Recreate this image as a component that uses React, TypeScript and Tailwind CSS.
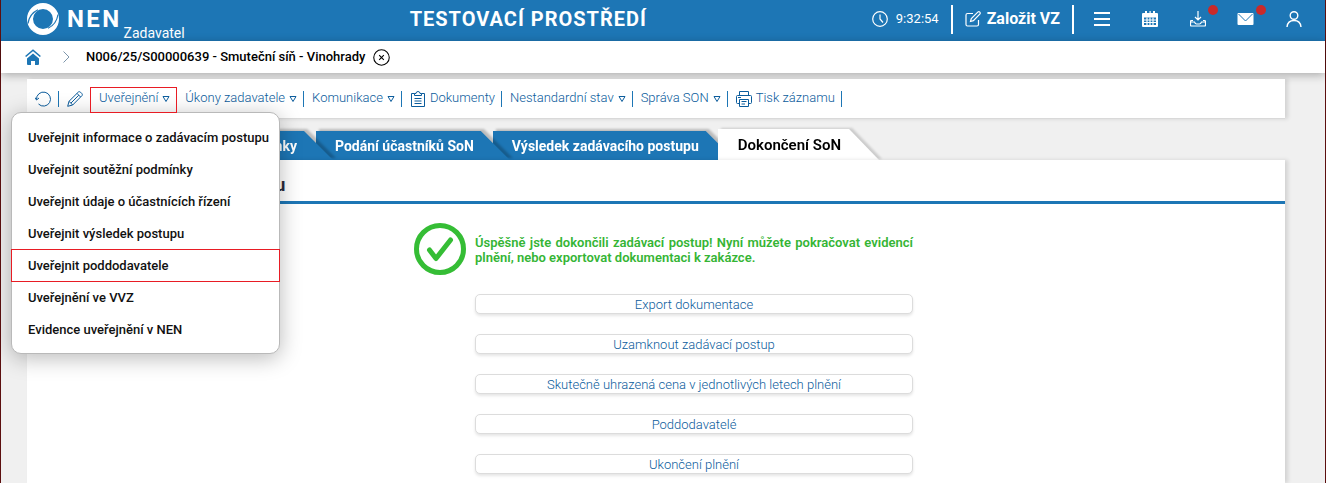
import type { ReactNode } from 'react'

const menuItems = [
  'Uveřejnit informace o zadávacím postupu',
  'Uveřejnit soutěžní podmínky',
  'Uveřejnit údaje o účastnících řízení',
  'Uveřejnit výsledek postupu',
  'Uveřejnit poddodavatele',
  'Uveřejnění ve VVZ',
  'Evidence uveřejnění v NEN',
]

const actions = [
  'Export dokumentace',
  'Uzamknout zadávací postup',
  'Skutečně uhrazená cena v jednotlivých letech plnění',
  'Poddodavatelé',
  'Ukončení plnění',
]

function Logo() {
  return (
    <svg viewBox="0 0 32 32" className="h-8 w-8" fill="none">
      <path
        fill="#fff"
        fillRule="evenodd"
        d="M16 0a16 16 0 1 1 0 32a16 16 0 0 1 0-32zM16 6a10 10 0 1 0 0 20a10 10 0 0 0 0-20z"
      />
      <path stroke="#1d76b5" strokeWidth="1.200" d="M1 20.500C2 14 5 9.500 11 6.800" />
      <path stroke="#1d76b5" strokeWidth="1.200" d="M31 11.500C30 18 27 22.500 21 25.200" />
    </svg>
  )
}

function Icon({ children, className = 'h-4 w-4' }: { children: ReactNode; className?: string }) {
  return (
    <svg viewBox="0 0 16 16" className={`shrink-0 ${className}`} fill="none" stroke="currentColor" strokeWidth="1.200">
      {children}
    </svg>
  )
}

function Triangle() {
  return (
    <svg viewBox="0 0 8 8" className="h-2 w-2 shrink-0" fill="none" stroke="currentColor">
      <path d="M1 1.500h6L4 6.500z" />
    </svg>
  )
}

function Divider() {
  return <span className="h-4 w-px shrink-0 bg-[#1d76b5]" />
}

function ToolItem({ label, icon, dropdown }: { label: string; icon?: ReactNode; dropdown?: boolean }) {
  return (
    <button className="flex items-center gap-1 whitespace-nowrap pl-2 pr-1.5">
      {icon}
      <span className="-mt-px">{label}</span>
      {dropdown && <Triangle />}
    </button>
  )
}

function HeaderButton({ label, badge, children }: { label: string; badge?: boolean; children: ReactNode }) {
  return (
    <button aria-label={label} className="relative flex h-9 w-12 items-center justify-center">
      {children}
      {badge && <span className="absolute right-1 top-1 h-[10px] w-[10px] rounded-full bg-[#c92a2a]" />}
    </button>
  )
}

function Header() {
  return (
    <header className="flex h-[41px] items-center justify-between bg-[#1d76b5] pb-[3px] pl-[26px] pr-[7px] text-white">
      <div className="flex items-center gap-2">
        <Logo />
        <div className="flex items-end gap-0.5">
          <span className="text-2xl leading-8 font-bold tracking-widest">NEN</span>
          <span className="-mb-2 text-sm leading-5">Zadavatel</span>
        </div>
      </div>
      <h1 className="text-xl leading-7 font-bold tracking-wider">TESTOVACÍ PROSTŘEDÍ</h1>
      <div className="flex items-center">
        <Icon>
          <circle cx="8" cy="8" r="7.300" />
          <path d="M8 3.500V8l3 3.500" />
        </Icon>
        <time className="ml-2 text-[13px]">9:32:54</time>
        <div className="ml-3 mr-1 flex h-[29px] items-center border-x-2 border-white pl-3">
          <button className="flex items-center gap-1.5 pr-3 text-base font-bold">
            <Icon>
              <path d="M8 2.500H2.500q-1.500 0-1.500 1.500v9.500q0 1.500 1.500 1.500H12q1.500 0 1.500-1.500V9" />
              <path d="M5.500 10.500l.8-3L13 .9q1-.6 1.800.2t.2 1.800L8.400 9.700z" />
            </Icon>
            Založit VZ
          </button>
        </div>
        <HeaderButton label="Menu">
          <Icon>
            <path strokeWidth="2" d="M0 2h16M0 8h16M0 14h16" />
          </Icon>
        </HeaderButton>
        <HeaderButton label="Kalendář">
          <Icon>
            <path fill="currentColor" stroke="none" fillRule="evenodd" d="M1 2h2V0h2v2h2.500V0h1.200v2H11V0h2v2h2q1 0 1 1v12q0 1-1 1H1q-1 0-1-1V3q0-1 1-1zM2 6.500v7.500h12V6.500z" />
            <path d="M2 9h12M2 11.500h12M5 6.500V14M8 6.500V14M11 6.500V14" />
          </Icon>
        </HeaderButton>
        <HeaderButton label="Stažené soubory" badge>
          <Icon>
            <path d="M8 0v8.500M5 6l3 3l3-3M3 9.500H1.500q-1 0-1 1V14q0 1 1 1h13q1 0 1-1v-3.500q0-1-1-1H13M.5 11h4q.8 2 2 2h3q1.200 0 2-2h4" />
          </Icon>
        </HeaderButton>
        <HeaderButton label="Zprávy" badge>
          <Icon className="h-4 w-[17px]">
            <rect x="0" y="2" width="16" height="12" rx="1" fill="currentColor" stroke="none" />
            <path stroke="#1d76b5" strokeWidth="1" d="M1 3l7 7l7-7" />
          </Icon>
        </HeaderButton>
        <HeaderButton label="Uživatel">
          <Icon>
            <circle cx="8" cy="4.500" r="3.800" strokeWidth="1.400" />
            <path strokeWidth="1.400" d="M1 16q.6-6.500 7-6.500t7 6.500" />
          </Icon>
        </HeaderButton>
      </div>
    </header>
  )
}

function Breadcrumb() {
  return (
    <nav className="flex h-8 items-center bg-white pl-6 text-[13px] font-medium text-black shadow-[0_2px_10px_rgba(0,0,0,0.3)]">
      <a href="#" aria-label="Domů" className="text-[#1d76b5]">
        <svg viewBox="0 0 16 16" className="h-4 w-4">
          <path fill="currentColor" d="M8 4.500l6 5V15q0 1-1 1h-3v-4H6v4H3q-1 0-1-1V9.500z" />
          <path fill="none" stroke="currentColor" strokeWidth="1.600" d="M.6 7.500L8 1.200l7.400 6.300" />
        </svg>
      </a>
      <svg viewBox="0 0 7 12" className="ml-[22px] h-3 w-[7px]" fill="none" stroke="#7d96ab">
        <path d="M.5.5L6 6L.5 11.500" />
      </svg>
      <span className="ml-4">N006/25/S00000639 - Smuteční síň - Vinohrady</span>
      <button aria-label="Zavřít" className="ml-2">
        <Icon className="h-[17px] w-[17px]">
          <circle cx="8" cy="8" r="7.300" strokeWidth="1" />
          <path strokeWidth="1" d="M5.800 5.800l4.400 4.400M10.200 5.800l-4.400 4.400" />
        </Icon>
      </button>
    </nav>
  )
}

function PublishMenu() {
  return (
    <ul className="absolute -left-4 top-[33px] z-20 w-[269px] rounded-[10px] border border-[#b9b9b9] bg-white py-2 text-[13px] font-medium whitespace-nowrap text-[#111] shadow-[0_4px_22px_rgba(0,0,0,0.28)]">
      {menuItems.map((item) => (
        <li key={item}>
          {item === 'Uveřejnit poddodavatele' ? (
            <button className="-mx-px -mb-px flex h-[33px] w-[269px] items-center border border-[#e81c24] px-4">{item}</button>
          ) : (
            <button className="flex h-8 w-full items-center px-4 pt-px">{item}</button>
          )}
        </li>
      ))}
    </ul>
  )
}

function Toolbar() {
  return (
    <div className="relative z-10 flex h-10 items-center border-b border-[#d9d9d9] bg-white text-[13px] font-light text-[#0b5c9c] shadow-[3px_0_4px_rgba(0,0,0,0.12)]">
      <button aria-label="Obnovit" className="pl-2 pr-[7px]">
        <Icon>
          <path strokeWidth="1" d="M1.500 8.500a7 7 0 1 1 2 4.500M0 6.500l1.500 2.500L4 7" />
        </Icon>
      </button>
      <Divider />
      <button aria-label="Upravit" className="pl-2">
        <Icon>
          <path strokeWidth="1" d="M.7 15.300l1.300-5L11.500.9q1-.6 2 .3l1.300 1.300q.9 1 .3 2L5.700 14zM2 10.300L5.700 14M10 2.400L13.600 6M4 12L11.800 4.200" />
        </Icon>
      </button>
      <div className="relative z-30 ml-[7px] mt-0.5 flex h-[26px] items-center border border-[#e81c24] pb-0.5">
        <ToolItem label="Uveřejnění" dropdown />
      </div>
      <ToolItem label="Úkony zadavatele" dropdown />
      <Divider />
      <ToolItem label="Komunikace" dropdown />
      <Divider />
      <ToolItem
        label="Dokumenty"
        icon={
          <Icon>
            <path strokeWidth="1" d="M4.500 2.500h-3v13h13v-13h-3M4.500 4.500v-2H6q0-2 2-2t2 2h1.500v2zM4.500 7.500h7M4.500 10h7M4.500 12.500h7" />
          </Icon>
        }
      />
      <Divider />
      <ToolItem label="Nestandardní stav" dropdown />
      <Divider />
      <ToolItem label="Správa SON" dropdown />
      <Divider />
      <ToolItem
        label="Tisk záznamu"
        icon={
          <Icon>
            <path strokeWidth="1" d="M3.500 4.500v-4h9v4M3.500 12.500h-2q-1 0-1-1v-6q0-1 1-1h13q1 0 1 1v6q0 1-1 1h-2M3.500 8.500h9v7h-9zM2 6.500h3M5.500 10.500h5M5.500 13h3.500" />
          </Icon>
        }
      />
      <Divider />
      <PublishMenu />
    </div>
  )
}

function Tab({ label, className = '' }: { label: string; className?: string }) {
  return (
    <div className={`-mr-[17px] flex drop-shadow-[3px_-2px_1px_rgba(0,0,0,0.22)] ${className}`}>
      <button className="h-[29px] w-full bg-[#1d76b5] pl-[19px] pr-9 text-right whitespace-nowrap text-white [clip-path:polygon(0_0,calc(100%-29px)_0,100%_100%,0_100%)]">
        {label}
      </button>
    </div>
  )
}

function Tabs() {
  return (
    <div className="isolate mt-[10px] flex items-end text-sm font-bold">
      <Tab label="Zadávací podmínky" className="z-30 w-[306px]" />
      <Tab label="Podání účastníků SoN" className="z-20" />
      <Tab label="Výsledek zadávacího postupu" className="z-10" />
      <div className="z-40 flex drop-shadow-[3px_-1px_1px_rgba(0,0,0,0.15)]">
        <button className="h-[31px] bg-white pl-5 pr-[38px] pt-0.5 text-[15px] font-semibold whitespace-nowrap text-black [clip-path:polygon(0_0,calc(100%-30px)_0,100%_100%,0_100%)]">
          Dokončení SoN
        </button>
      </div>
    </div>
  )
}

export default function App() {
  return (
    <div className="flex min-h-screen flex-col border-x border-[#5c0f0f] bg-[#f0f0f0] font-['Roboto',sans-serif]">
      <Header />
      <Breadcrumb />
      <main className="flex flex-1 flex-col pl-[26px] pr-10 pt-[6px]">
        <Toolbar />
        <Tabs />
        <section className="relative flex-1 bg-white shadow-[3px_0_4px_rgba(0,0,0,0.12)]">
          <h2 className="flex h-11 items-center border-b-[3px] border-[#1d76b5] pl-4 pt-2 text-lg font-bold text-[#2b2b3c]">
            Ukončení zadávacího postupu
          </h2>
          <div className="mx-auto mt-[19px] grid w-full max-w-[514px] grid-cols-[52px_1fr] gap-x-[9px] pl-[15px]">
            <svg viewBox="0 0 52 52" className="h-[52px] w-[52px]" fill="none" stroke="#35bd35" strokeWidth="5">
              <circle cx="26" cy="26" r="23.500" />
              <path d="M15.500 27l6.500 8.500L36.500 17" strokeLinecap="round" strokeLinejoin="round" />
            </svg>
            <p className="mt-3 text-justify text-[13px] leading-[15px] font-semibold text-[#35b535]">
              Úspěšně jste dokončili zadávací postup! Nyní můžete pokračovat evidencí plnění, nebo exportovat dokumentaci k zakázce.
            </p>
            <div className="col-start-2 mt-[19px] flex flex-col gap-5 pb-[9px]">
              {actions.map((action) => (
                <button
                  key={action}
                  className="h-5 rounded-[5px] border border-[#dcdcdc] bg-white pt-px text-[13px] leading-[18px] font-light text-[#0b5c9c] shadow-[0_2px_3px_rgba(0,0,0,0.1)]"
                >
                  {action}
                </button>
              ))}
            </div>
          </div>
        </section>
      </main>
    </div>
  )
}
